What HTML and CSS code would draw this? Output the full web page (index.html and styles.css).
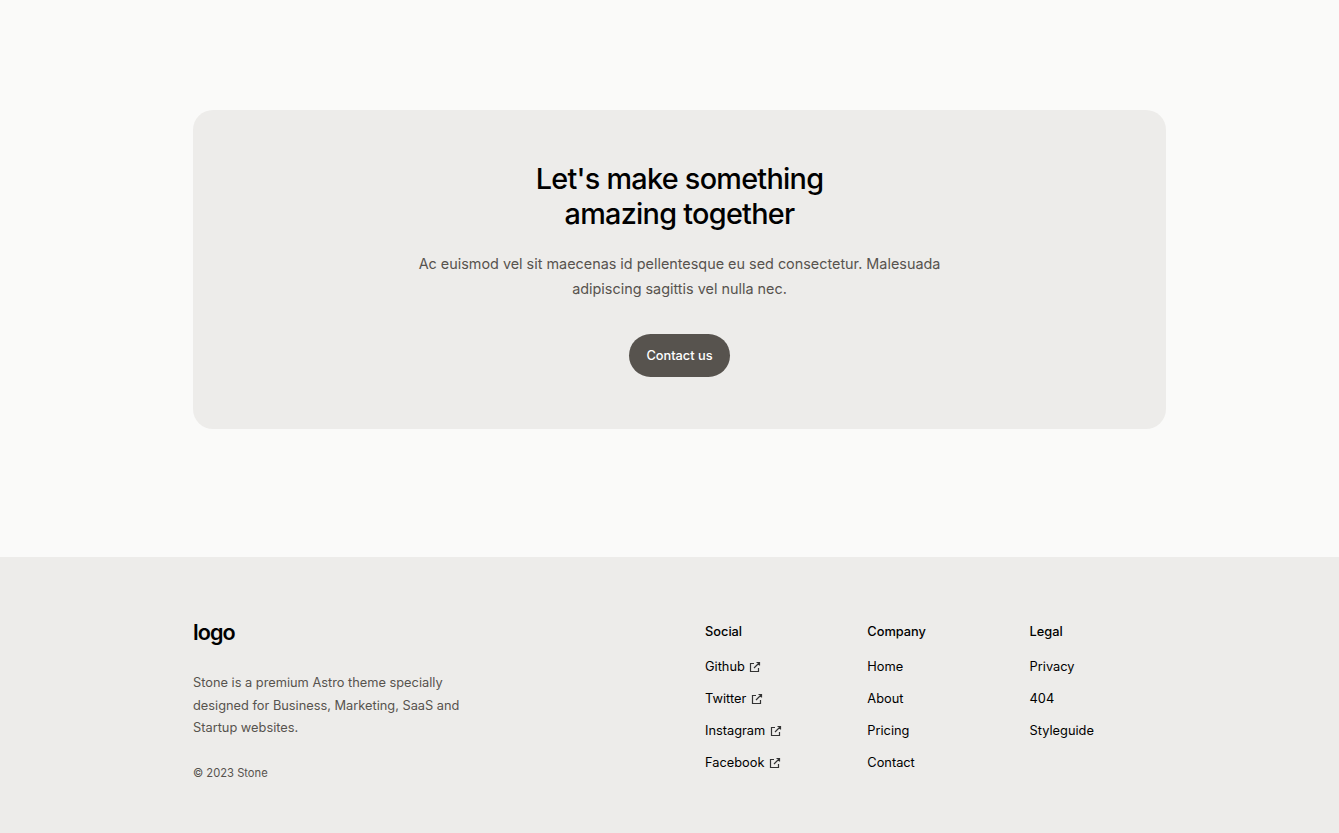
FILE: index.html
```html
<!DOCTYPE html>
<html lang="en">
<head>
<meta charset="utf-8">
<title>Stone</title>
<link rel="stylesheet" href="styles.css">
</head>
<body>
<main class="main">
  <section class="cta">
    <h2 class="cta-title">Let's make something<br>amazing together</h2>
    <p class="cta-text">Ac euismod vel sit maecenas id pellentesque eu sed consectetur. Malesuada adipiscing sagittis vel nulla nec.</p>
    <a class="btn" href="#">Contact us</a>
  </section>
</main>
<footer class="footer">
  <div class="footer-inner">
    <div class="brand">
      <a class="logo" href="#">logo</a>
      <p class="brand-text">Stone is a premium Astro theme specially designed for Business, Marketing, SaaS and Startup websites.</p>
      <p class="copy">© 2023 Stone</p>
    </div>
    <div class="cols">
      <div class="col">
        <h3 class="col-title">Social</h3>
        <ul class="links">
          <li><a href="#">Github <svg class="ext" viewBox="0 0 12 12"><path d="M5 2.5H1.5v8h8V7M5 7l5.5-5.5M7.5 1.5h3v3"/></svg></a></li>
          <li><a href="#">Twitter <svg class="ext" viewBox="0 0 12 12"><path d="M5 2.5H1.5v8h8V7M5 7l5.5-5.5M7.5 1.5h3v3"/></svg></a></li>
          <li><a href="#">Instagram <svg class="ext" viewBox="0 0 12 12"><path d="M5 2.5H1.5v8h8V7M5 7l5.5-5.5M7.5 1.5h3v3"/></svg></a></li>
          <li><a href="#">Facebook <svg class="ext" viewBox="0 0 12 12"><path d="M5 2.5H1.5v8h8V7M5 7l5.5-5.5M7.5 1.5h3v3"/></svg></a></li>
        </ul>
      </div>
      <div class="col">
        <h3 class="col-title">Company</h3>
        <ul class="links">
          <li><a href="#">Home</a></li>
          <li><a href="#">About</a></li>
          <li><a href="#">Pricing</a></li>
          <li><a href="#">Contact</a></li>
        </ul>
      </div>
      <div class="col">
        <h3 class="col-title">Legal</h3>
        <ul class="links">
          <li><a href="#">Privacy</a></li>
          <li><a href="#">404</a></li>
          <li><a href="#">Styleguide</a></li>
        </ul>
      </div>
    </div>
  </div>
</footer>
</body>
</html>
```
FILE: styles.css
```css
* { box-sizing: border-box; }
html, body { margin: 0; padding: 0; }
body {
  background: #fafaf9;
  font-family: Inter, "Liberation Sans", sans-serif;
  color: #000;
  height: 833px;
  overflow: hidden;
}
a { color: inherit; text-decoration: none; }
.main { height: 557px; padding: 110px 173px 0 193px; }
.cta {
  background: #edecea;
  border-radius: 20px;
  height: 319px;
  padding-top: 51px;
  display: flex;
  flex-direction: column;
  align-items: center;
  text-align: center;
}
.cta-title {
  margin: 0;
  font-size: 28.8px;
  line-height: 35px;
  font-weight: 500;
  letter-spacing: -0.72px;
}
.cta-text {
  margin: 20px 0 0;
  width: 560px;
  font-size: 14.4px;
  line-height: 25px;
  color: #57534e;
}
.btn {
  margin-top: 33px;
  width: 101px;
  height: 43px;
  border-radius: 22px;
  background: #57534e;
  color: #fff;
  font-size: 12.8px;
  font-weight: 500;
  line-height: 43px;
}
.footer { background: #edecea; height: 276px; }
.footer-inner {
  padding: 60px 0 0 193px;
  display: flex;
}
.brand { width: 512px; }
.logo {
  display: block;
  font-size: 21.6px;
  font-weight: 600;
  line-height: 30px;
  letter-spacing: -0.9px;
}
.brand-text {
  margin: 25px 0 0;
  width: 280px;
  font-size: 12.8px;
  line-height: 22.5px;
  color: #57534e;
}
.copy {
  margin: 25px 0 0;
  font-size: 11.2px;
  line-height: 16px;
  color: #57534e;
}
.cols { display: grid; grid-template-columns: repeat(3, 162.3px); }
.col-title {
  margin: 6px 0 0;
  font-size: 12.8px;
  font-weight: 500;
  line-height: 18px;
}
.links {
  list-style: none;
  margin: 16px 0 0;
  padding: 0;
  display: flex;
  flex-direction: column;
  gap: 12px;
  font-size: 12.8px;
  line-height: 20px;
}
.ext {
  width: 12px;
  height: 12px;
  margin-left: 1px;
  vertical-align: -2px;
  fill: none;
  stroke: #333;
  stroke-width: 1.2;
}
```
